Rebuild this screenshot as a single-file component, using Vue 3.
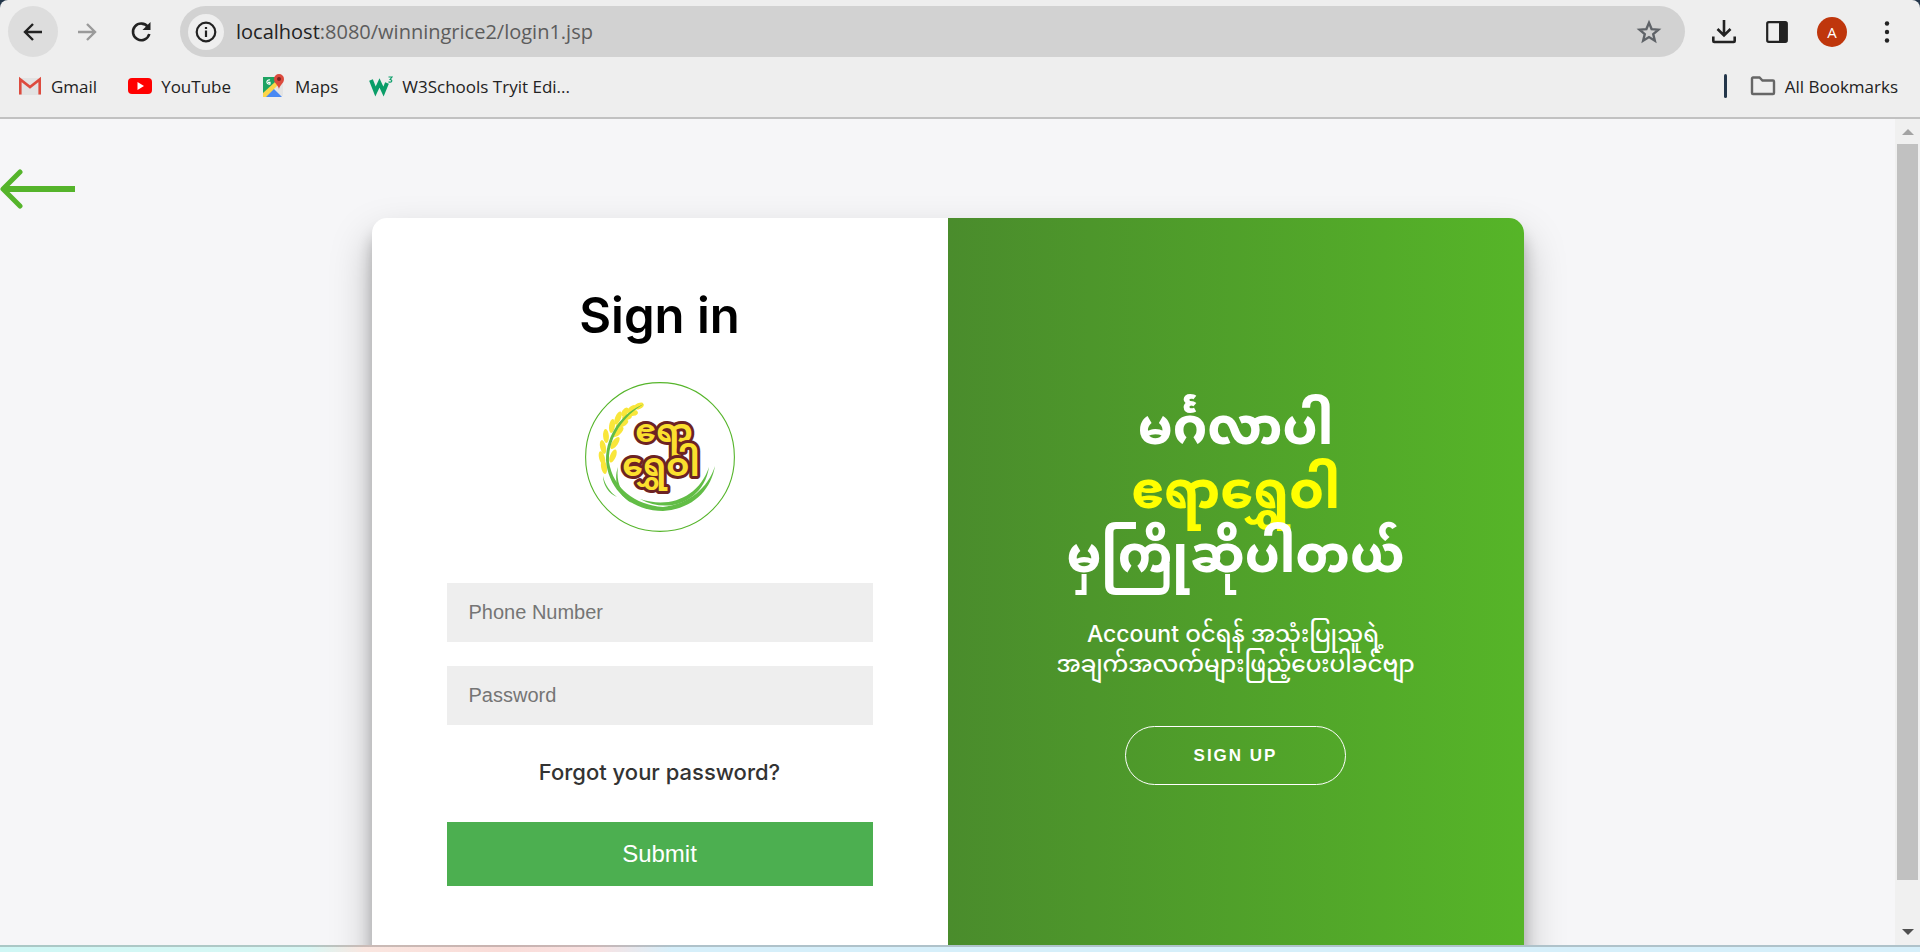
<script setup>
import { ref } from 'vue';

const url = { host: 'localhost', rest: ':8080/winningrice2/login1.jsp' };

const bookmarks = [
  { id: 'gmail', label: 'Gmail' },
  { id: 'youtube', label: 'YouTube' },
  { id: 'maps', label: 'Maps' },
  { id: 'w3', label: 'W3Schools Tryit Edi...' }
];

// wheat grains: x, y, rotation in degrees
const grains = [
  [54, 24, 65], [47, 27, 50], [48, 31, 80], [40, 30, 35], [42, 35, 72],
  [33, 36, 22], [37, 42, 62], [27, 44, 8], [33, 50, 48], [21, 54, -4],
  [30, 61, 35], [18, 65, -12], [28, 74, 22], [17, 76, -15], [19, 85, -10]
];

const phone = ref('');
const password = ref('');
</script>

<template>
  <div class="window">
    <header class="chrome">
      <div class="toolbar">
        <button class="nav-btn active" type="button" aria-label="Back">
          <svg width="24" height="24" viewBox="0 0 24 24"><path d="M21 12H4M12 4l-8 8 8 8" fill="none" stroke="#222" stroke-width="2.4" /></svg>
        </button>
        <button class="nav-btn" type="button" aria-label="Forward">
          <svg width="24" height="24" viewBox="0 0 24 24"><path d="M3 12h17M12 4l8 8-8 8" fill="none" stroke="#9a9a9a" stroke-width="2.4" /></svg>
        </button>
        <button class="nav-btn" type="button" aria-label="Reload">
          <svg width="24" height="24" viewBox="0 0 24 24"><path d="M19 7A8.3 8.3 0 1 0 20.3 14" fill="none" stroke="#222" stroke-width="2.6" /><path d="M21.500 2v8h-8z" fill="#222" /></svg>
        </button>
        <div class="address">
          <span class="info">
            <svg width="24" height="24" viewBox="0 0 24 24"><circle cx="12" cy="12" r="9.3" fill="none" stroke="#222" stroke-width="2.2" /><path d="M12 10.500v6.500M12 7v2" stroke="#222" stroke-width="2.2" /></svg>
          </span>
          <span class="url"><b>{{ url.host }}</b>{{ url.rest }}</span>
          <svg width="26" height="26" viewBox="0 0 24 24"><path d="M12 3.500l2.400 5.800 6.300.5-4.800 4.100 1.500 6.100-5.400-3.300-5.400 3.300 1.500-6.100-4.800-4.100 6.300-.5z" fill="none" stroke="#5f6368" stroke-width="2.2" /></svg>
        </div>
        <div class="tools">
          <svg width="26" height="26" viewBox="0 0 26 26"><path d="M13 1v15M6.500 10l6.500 6.500 6.500-6.500M2.300 17.500V22a1 1 0 0 0 1 1h19.400a1 1 0 0 0 1-1v-4.500" fill="none" stroke="#222" stroke-width="2.6" /></svg>
          <svg width="24" height="24" viewBox="0 0 24 24"><rect x="2.200" y="2.200" width="19.600" height="19.600" rx="1.500" fill="none" stroke="#222" stroke-width="2.2" /><path d="M14 2h8v20h-8z" fill="#222" /></svg>
          <span class="avatar">A</span>
          <svg width="24" height="24" viewBox="0 0 24 24" fill="#222"><circle cx="12" cy="3.500" r="2.200" /><circle cx="12" cy="12" r="2.200" /><circle cx="12" cy="20.500" r="2.200" /></svg>
        </div>
      </div>
      <nav class="bookmarks">
        <a v-for="b in bookmarks" :key="b.id" class="bookmark" href="#">
          <svg v-if="b.id === 'gmail'" width="24" height="24" viewBox="0 0 24 24"><path d="M1 4h22v17H1z" fill="#e3e3e3" /><path d="M2.300 20.500V5.500L12 13l9.700-7.500v15" fill="none" stroke="#dd4b3e" stroke-width="2.6" /></svg>
          <svg v-else-if="b.id === 'youtube'" width="24" height="24" viewBox="0 0 24 24"><rect y="4" width="24" height="16" rx="4" fill="#f00" /><path d="M9.500 8v8l6.500-4z" fill="#fff" /></svg>
          <svg v-else-if="b.id === 'maps'" width="24" height="24" viewBox="0 0 24 24"><path d="M1 3h14v8L1 22z" fill="#1ea362" /><path d="M12 13l9-6v15h-3z" fill="#e4e4e4" /><path d="M2 23l9-9 9 9z" fill="#4a89f3" /><path d="M1 19L13 8l3 3L4 23H1z" fill="#fcd54a" /><path d="M17 16c0-5-5-6-5-11a5 5 0 0 1 10 0c0 5-5 6-5 11z" fill="#dc4a3d" /><circle cx="17" cy="5" r="2" fill="#7d2320" /><path d="M8 6a2.200 2.200 0 1 0 0 4V8.300H6" fill="none" stroke="#fff" stroke-width="1.2" /></svg>
          <svg v-else width="24" height="24" viewBox="0 0 24 24"><path d="M2 6l4.500 11.500L10.500 9l4 8.500L18 9" fill="none" stroke="#0a9d68" stroke-width="4" /><path d="M19.500 3h3.500l-2 2.500c3 .4 2 3.400-1.500 2.400" fill="none" stroke="#0a9d68" stroke-width="1.1" /></svg>
          <span>{{ b.label }}</span>
        </a>
        <span class="divider"></span>
        <a class="bookmark" href="#">
          <svg width="26" height="24" viewBox="0 0 26 24"><path d="M2 4.500a1 1 0 0 1 1-1h6.500l3 3H23a1 1 0 0 1 1 1V19a1 1 0 0 1-1 1H3a1 1 0 0 1-1-1z" fill="none" stroke="#666" stroke-width="2.4" /></svg>
          <span>All Bookmarks</span>
        </a>
      </nav>
    </header>

    <div class="viewport">
      <main class="page">
        <a class="back" href="#" aria-label="Go back">
          <svg width="75" height="40" viewBox="0 0 75 40"><path d="M75 20H4" stroke="#55b42b" stroke-width="6" /><path d="M20 3L3 20l17 17" fill="none" stroke="#55b42b" stroke-width="5" stroke-linecap="round" stroke-linejoin="round" /></svg>
        </a>
        <div class="card">
          <form class="sign-in" @submit.prevent>
            <h1>Sign in</h1>
            <svg class="logo" width="150" height="150" viewBox="0 0 150 150">
              <circle cx="75" cy="75" r="74.400" fill="#fff" stroke="#56b52b" stroke-width="1.1" />
              <g fill="#f9e63a">
                <ellipse v-for="(g, i) in grains" :key="i" rx="2.900" :ry="g[1] < 36 ? 5 : 7" :transform="`translate(${g[0]} ${g[1]}) rotate(${g[2]})`" />
              </g>
              <g fill="#62bd46">
                <path d="M59 22C38 30 21 52 21 78c2 29 25 51 57 51 30-2 48-21 52-45-7 22-26 38-52 41-28-2-50-19-54-45C23 56 38 34 59 22z" />
                <path d="M33 85c-2 14 2 25 14 36-14-7-19-22-14-36zM18 94c2 9 7 16 14 21-8-3-14-12-14-21zM55 117c30 10 59-2 69-32-5 34-40 48-69 32z" />
              </g>
              <g class="logo-text">
                <text x="79" y="60">ဧရာ</text>
                <text x="76" y="94">ရွှေဝါ</text>
              </g>
            </svg>
            <input v-model="phone" type="text" placeholder="Phone Number" aria-label="Phone Number" />
            <input v-model="password" type="password" placeholder="Password" aria-label="Password" />
            <a class="forgot" href="#">Forgot your password?</a>
            <button class="submit" type="submit">Submit</button>
          </form>
          <section class="welcome">
            <h2>မင်္ဂလာပါ<br /><span>ဧရာရွှေဝါ</span><br />မှကြိုဆိုပါတယ်</h2>
            <p>Account ဝင်ရန် အသုံးပြုသူရဲ့<br />အချက်အလက်များဖြည့်ပေးပါခင်ဗျာ</p>
            <button class="sign-up" type="button">SIGN UP</button>
          </section>
        </div>
      </main>
      <div class="scrollbar">
        <svg width="12" height="6" viewBox="0 0 12 6"><path d="M0 6l6-6 6 6z" fill="#a3a3a3" /></svg>
        <span class="thumb"></span>
        <svg width="12" height="6" viewBox="0 0 12 6"><path d="M0 0h12L6 6z" fill="#505050" /></svg>
      </div>
    </div>
    <div class="taskbar"></div>
  </div>
</template>

<style>
body {
  background: #23364a;
}
</style>

<style scoped>
* {
  box-sizing: border-box;
}

.window {
  display: flex;
  flex-direction: column;
  height: 100vh;
  overflow: hidden;
  font-family: Inter, "Noto Sans Myanmar", "Liberation Sans", sans-serif;
}

a {
  color: inherit;
  text-decoration: none;
}

button {
  border: 0;
  cursor: pointer;
}

.chrome {
  flex: none;
  background: #eee;
  border-bottom: 2px solid #c1c1c1;
  border-radius: 8px 8px 0 0;
  font-family: "Open Sans", sans-serif;
  color: #222;
}

.toolbar {
  display: flex;
  align-items: center;
  padding: 6px 21px 0 8px;
}

.nav-btn {
  display: flex;
  align-items: center;
  justify-content: center;
  width: 50px;
  height: 51px;
  margin-right: 4px;
  padding: 0;
  border-radius: 50%;
  background: none;
}

.nav-btn.active {
  background: #ddd;
}

.address {
  display: flex;
  flex: 1;
  align-items: center;
  height: 51px;
  margin-left: 10px;
  padding: 0 23px 0 8px;
  border-radius: 26px;
  background: #d2d2d2;
}

.info {
  display: flex;
  align-items: center;
  justify-content: center;
  width: 36px;
  height: 36px;
  border-radius: 50%;
  background: #eee;
}

.url {
  flex: 1;
  margin-left: 12px;
  font-size: 20px;
  color: #5c5c5c;
}

.url b {
  font-weight: 400;
  color: #222;
}

.tools {
  display: flex;
  align-items: center;
  gap: 28px;
  margin-left: 26px;
}

.avatar {
  width: 30px;
  height: 30px;
  border-radius: 50%;
  background: #bf360c;
  color: #fff;
  font-size: 15px;
  line-height: 30px;
  text-align: center;
}

.bookmarks {
  display: flex;
  align-items: center;
  gap: 31px;
  height: 60px;
  padding: 0 22px 2px 18px;
  font-size: 17px;
}

.bookmark {
  display: flex;
  align-items: center;
  gap: 9px;
}

.divider {
  width: 3px;
  height: 24px;
  margin: 0 -8px 0 auto;
  border-radius: 2px;
  background: #23364a;
}

.viewport {
  display: flex;
  flex: 1;
  min-height: 0;
  background: #f6f6f8;
}

.page {
  flex: 1;
  overflow: hidden;
  padding-top: 50px;
}

.back {
  display: block;
  width: 75px;
  height: 40px;
}

.card {
  display: grid;
  grid-template-columns: 1fr 1fr;
  max-width: 1152px;
  min-height: 780px;
  margin: 9px auto 0;
  overflow: hidden;
  border-radius: 15px;
  background: #fff;
  box-shadow: 0 21px 42px rgba(0, 0, 0, 0.25), 0 15px 15px rgba(0, 0, 0, 0.22);
}

.sign-in {
  display: flex;
  flex-direction: column;
  align-items: center;
  padding: 68px 75px 0;
}

h1 {
  margin: 0;
  font-size: 49px;
  font-weight: 600;
  line-height: 60px;
}

.logo {
  margin: 36px 0 51px;
}

.logo-text {
  fill: #fbe02e;
  stroke: #6d2323;
  stroke-width: 6;
  paint-order: stroke;
  stroke-linejoin: round;
  font-size: 33px;
  font-weight: 700;
  text-anchor: middle;
}

input {
  width: 100%;
  height: 59px;
  margin-bottom: 24px;
  padding: 0 22px;
  border: 0;
  background: #eee;
  font-family: "Liberation Sans", sans-serif;
  font-size: 20px;
}

input::placeholder {
  color: #757575;
}

.forgot {
  margin: 8px 0 35px;
  font-size: 22px;
  font-weight: 500;
  line-height: 30px;
  color: #333;
}

.submit {
  width: 100%;
  height: 64px;
  background: #4caf50;
  color: #fff;
  font-family: "Liberation Sans", sans-serif;
  font-size: 24px;
}

.welcome {
  display: flex;
  flex-direction: column;
  align-items: center;
  padding-top: 177px;
  background: linear-gradient(to right, #4a8c2c, #56b528);
  color: #fff;
  text-align: center;
}

h2 {
  margin: 0;
  font-size: 49px;
  font-weight: 800;
  line-height: 64px;
}

h2 span {
  color: #ff0;
}

p {
  margin: 32px 0 47px;
  font-size: 23px;
  font-weight: 500;
  line-height: 30px;
}

.sign-up {
  width: 221px;
  height: 59px;
  border: 1px solid #fff;
  border-radius: 30px;
  background: none;
  color: #fff;
  font-family: "Liberation Sans", sans-serif;
  font-size: 17px;
  font-weight: 700;
  letter-spacing: 2px;
}

.scrollbar {
  display: flex;
  flex-direction: column;
  align-items: center;
  width: 25px;
  padding: 10px 0;
  background: #f0f0f0;
}

.thumb {
  width: 21px;
  height: 736px;
  margin: 9px 0 auto;
  background: #c1c1c1;
}

.taskbar {
  flex: none;
  height: 7px;
  border-top: 2px solid rgba(60, 60, 60, 0.25);
  background: linear-gradient(to right, #cff7f5 0, #d8f7f4 16%, #fae6e0 19%, #f9dcd8 26%, #fae2e2 31%, #d6effa 35%, #d6effa 100%);
}
</style>
